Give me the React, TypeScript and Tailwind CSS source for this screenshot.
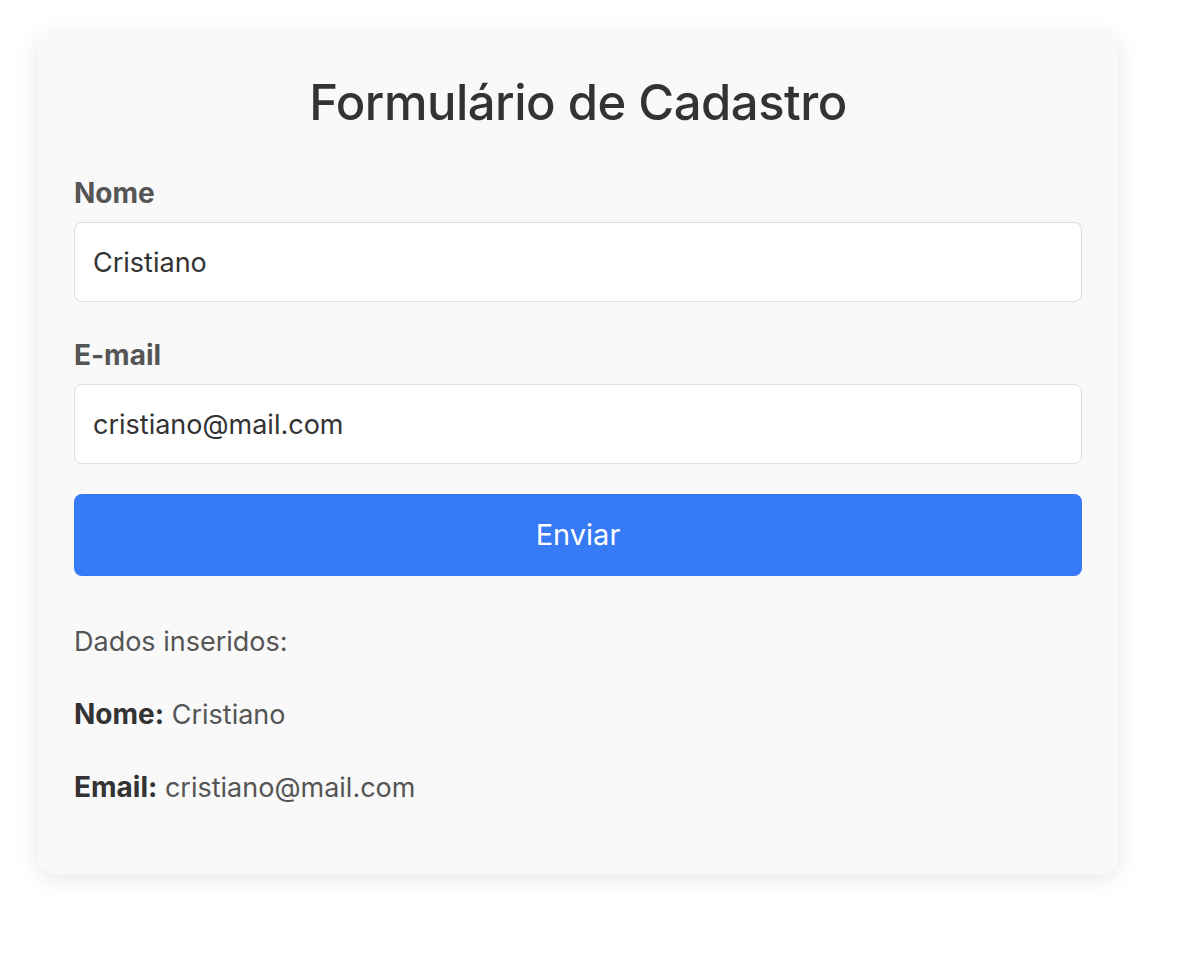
import { useState } from "react";

export default function App() {
  const [nome, setNome] = useState("Cristiano");
  const [email, setEmail] = useState("cristiano@mail.com");

  return (
    <div
      className="min-h-screen bg-white pt-[33px] pl-[38px]"
      style={{ fontFamily: "Inter, 'Noto Sans', sans-serif" }}
    >
      <div className="w-[1080px] rounded-2xl bg-[#f9f9f9] px-9 pt-[39px] pb-[70px] shadow-[0_4px_24px_rgba(0,0,0,0.1)]">
        <h1 className="text-center text-[49px] leading-[62px] font-medium tracking-[-0.5px] text-[#333]">
          Formulário de Cadastro
        </h1>

        <form onSubmit={(e) => e.preventDefault()}>
          <label className="mt-[43px] mb-[13px] block text-[28px] leading-[32px] font-bold text-[#555]">
            Nome
          </label>
          <input
            value={nome}
            onChange={(e) => setNome(e.target.value)}
            className="block h-[80px] w-full rounded-lg border border-[#ddd] bg-white px-[18px] text-[27px] text-[#333] outline-none"
          />

          <label className="mt-[37px] mb-[13px] block text-[28px] leading-[32px] font-bold text-[#555]">
            E-mail
          </label>
          <input
            value={email}
            onChange={(e) => setEmail(e.target.value)}
            className="block h-[80px] w-full rounded-lg border border-[#ddd] bg-white px-[18px] text-[27px] text-[#333] outline-none"
          />

          <button
            type="submit"
            className="mt-[30px] block h-[82px] w-full rounded-lg bg-[#367af6] text-[29px] text-white"
          >
            Enviar
          </button>
        </form>

        <div className="mt-[50px] flex flex-col gap-[40px] text-[27px] leading-[32px] text-[#555]">
          <p>Dados inseridos:</p>
          <p>
            <strong className="text-[28px] font-bold text-[#333]">Nome:</strong> {nome}
          </p>
          <p>
            <strong className="text-[28px] font-bold text-[#333]">Email:</strong> {email}
          </p>
        </div>
      </div>
    </div>
  );
}
